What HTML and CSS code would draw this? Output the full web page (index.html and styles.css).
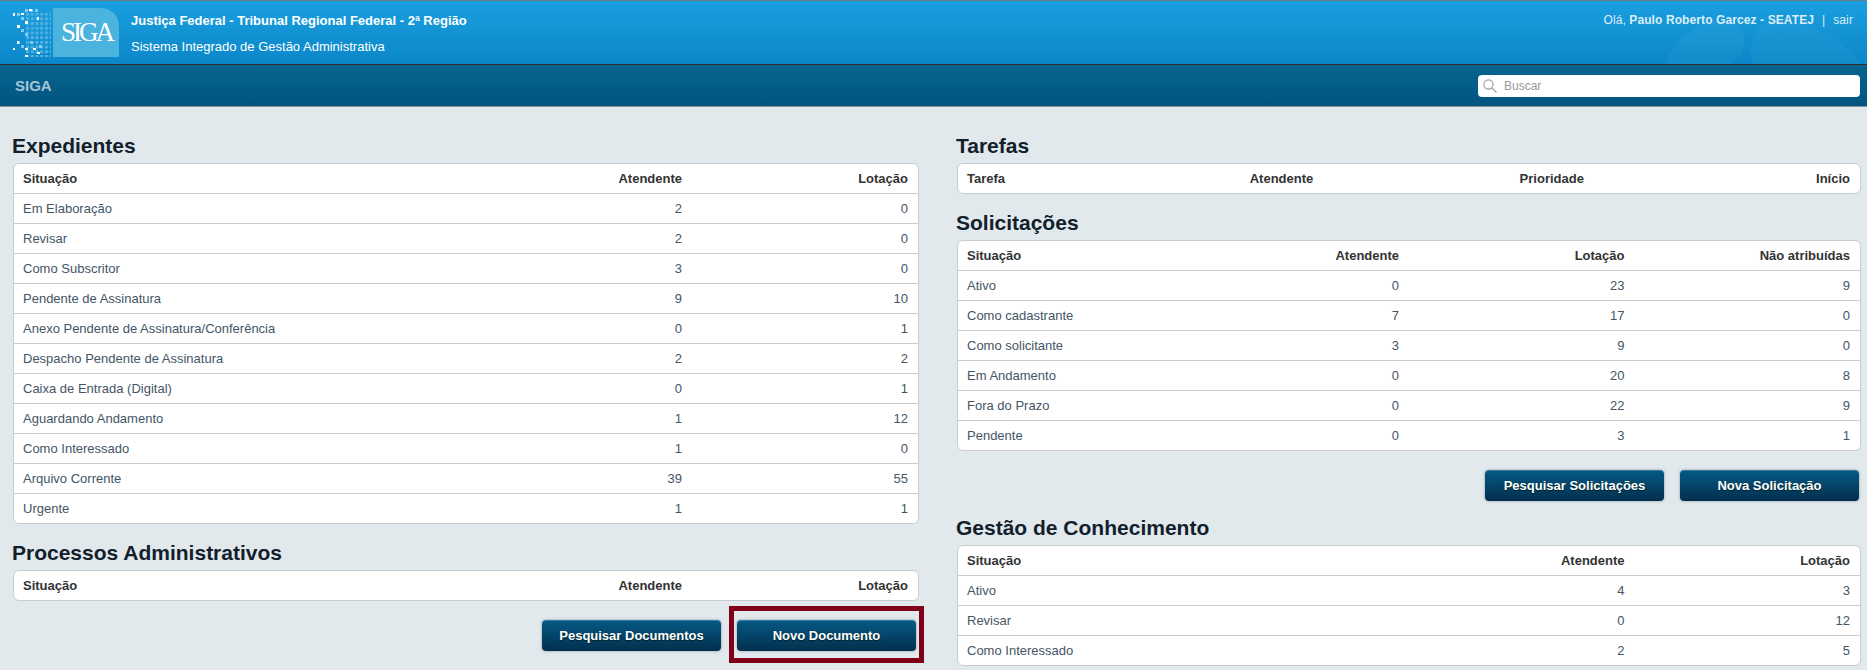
FILE: index.html
```html
<!doctype html>
<html lang="pt-BR">
<head>
    <meta charset="UTF-8">
    <title>SIGA</title>
    <link rel="stylesheet" href="styles.css">
</head>
<body>
<div class="topo">
    <svg class="marca-dagua" width="207" height="63" viewBox="0 0 207 63">
        <path d="M6 63C12 42 30 26 52 21C72 17 86 24 84 40C83 52 78 58 70 63Z" fill="#fff" opacity=".04"/>
        <path d="M92 63C88 44 92 28 106 22C122 16 150 22 172 36C186 45 196 54 201 63Z" fill="#fff" opacity=".035"/>
    </svg>
    <div class="logo">
        <svg class="logo-pontos" width="40" height="50" viewBox="0 0 40 50">
            <defs>
                <pattern id="grade" x="0" y="0" width="4.7" height="4.7" patternUnits="userSpaceOnUse">
                    <rect width="3" height="3" fill="#4fb2e3"/>
                </pattern>
            </defs>
            <rect x="14" y="5" width="25" height="44" fill="url(#grade)"/>
            <g fill="#7fcbef">
                <rect x="5" y="5" width="3" height="3"/><rect x="9" y="9" width="3" height="3"/><rect x="13" y="1" width="3" height="3"/>
                <rect x="18" y="1" width="3" height="3"/><rect x="23" y="1" width="3" height="3"/><rect x="9" y="21" width="3" height="3"/>
                <rect x="13" y="25" width="3" height="3"/><rect x="5" y="33" width="3" height="3"/><rect x="9" y="37" width="3" height="3"/>
                <rect x="18" y="33" width="3" height="3"/><rect x="27" y="37" width="3" height="3"/>
            </g>
            <g fill="#fff">
                <rect x="1" y="5" width="2" height="3"/><rect x="9" y="5" width="3" height="2"/><rect x="17" y="1" width="3" height="2"/>
                <rect x="25" y="9" width="2" height="3"/><rect x="5" y="17" width="3" height="3"/><rect x="13" y="13" width="3" height="3"/>
                <rect x="5" y="33" width="2" height="3"/><rect x="1" y="40" width="2" height="2"/><rect x="13" y="40" width="3" height="2"/>
                <rect x="21" y="40" width="3" height="2"/><rect x="13" y="47" width="3" height="2"/><rect x="25" y="44" width="3" height="2"/>
            </g>
        </svg>
        <div class="logo-caixa">SIGA</div>
    </div>
    <div class="topo-titulos">
        <div class="topo-orgao">Justiça Federal - Tribunal Regional Federal - 2ª Região</div>
        <div class="topo-sistema">Sistema Integrado de Gestão Administrativa</div>
    </div>
    <div class="topo-usuario">Olá, <b>Paulo Roberto Garcez - SEATEJ</b><span class="sep">|</span>sair</div>
</div>
<div class="nav">
    <span class="nav-titulo">SIGA</span>
    <div class="busca">
        <svg width="14" height="14" viewBox="0 0 14 14" fill="none" stroke="#9a9a9a" stroke-width="1.1">
            <circle cx="5.5" cy="5.5" r="4.6"/>
            <path d="M9 9L13.5 13.5"/>
        </svg>
        <span>Buscar</span>
    </div>
</div>
<div class="main">
    <div class="coluna">
        <h2>Expedientes</h2>
        <table class="cols-3">
            <tr><th>Situação</th><th>Atendente</th><th>Lotação</th></tr>
            <tr><td>Em Elaboração</td><td>2</td><td>0</td></tr>
            <tr><td>Revisar</td><td>2</td><td>0</td></tr>
            <tr><td>Como Subscritor</td><td>3</td><td>0</td></tr>
            <tr><td>Pendente de Assinatura</td><td>9</td><td>10</td></tr>
            <tr><td>Anexo Pendente de Assinatura/Conferência</td><td>0</td><td>1</td></tr>
            <tr><td>Despacho Pendente de Assinatura</td><td>2</td><td>2</td></tr>
            <tr><td>Caixa de Entrada (Digital)</td><td>0</td><td>1</td></tr>
            <tr><td>Aguardando Andamento</td><td>1</td><td>12</td></tr>
            <tr><td>Como Interessado</td><td>1</td><td>0</td></tr>
            <tr><td>Arquivo Corrente</td><td>39</td><td>55</td></tr>
            <tr><td>Urgente</td><td>1</td><td>1</td></tr>
        </table>
        <h2>Processos Administrativos</h2>
        <table class="cols-3">
            <tr><th>Situação</th><th>Atendente</th><th>Lotação</th></tr>
        </table>
        <div class="botoes botoes-doc">
            <a class="botao">Pesquisar Documentos</a>
            <span class="destaque"><a class="botao">Novo Documento</a></span>
        </div>
    </div>
    <div class="coluna">
        <h2>Tarefas</h2>
        <table class="cols-tarefas">
            <tr><th>Tarefa</th><th>Atendente</th><th>Prioridade</th><th>Início</th></tr>
        </table>
        <h2>Solicitações</h2>
        <table class="cols-4">
            <tr><th>Situação</th><th>Atendente</th><th>Lotação</th><th>Não atribuídas</th></tr>
            <tr><td>Ativo</td><td>0</td><td>23</td><td>9</td></tr>
            <tr><td>Como cadastrante</td><td>7</td><td>17</td><td>0</td></tr>
            <tr><td>Como solicitante</td><td>3</td><td>9</td><td>0</td></tr>
            <tr><td>Em Andamento</td><td>0</td><td>20</td><td>8</td></tr>
            <tr><td>Fora do Prazo</td><td>0</td><td>22</td><td>9</td></tr>
            <tr><td>Pendente</td><td>0</td><td>3</td><td>1</td></tr>
        </table>
        <div class="botoes">
            <a class="botao">Pesquisar Solicitações</a>
            <a class="botao">Nova Solicitação</a>
        </div>
        <h2>Gestão de Conhecimento</h2>
        <table class="cols-3">
            <tr><th>Situação</th><th>Atendente</th><th>Lotação</th></tr>
            <tr><td>Ativo</td><td>4</td><td>3</td></tr>
            <tr><td>Revisar</td><td>0</td><td>12</td></tr>
            <tr><td>Como Interessado</td><td>2</td><td>5</td></tr>
        </table>
    </div>
</div>
</body>
</html>
```

FILE: styles.css
```css
*{margin: 0;padding: 0;box-sizing: border-box}
html,body{height: 100%;overflow: hidden}
body{background: #e2e9ed;font-family: "Liberation Sans", Arial, sans-serif;font-size: 13px;color: #456;}

.topo{
    position: relative;
    height: 65px;
    display: flex;
    background: linear-gradient(#1a9fe0, #0b87c8);
    border-top: 1px solid #6b7b85;
    border-bottom: 1px solid #3a2a20;
    color: #fff;
}
.marca-dagua{position: absolute;right: 0;bottom: 0}
.logo{display: flex;align-items: flex-start;margin: 7px 0 0 12px;width: 107px}
.logo-pontos{flex: none}
.logo-caixa{
    flex: none;
    width: 66px;
    height: 49px;
    margin-left: 1px;
    background: #4ab3de;
    border-top-right-radius: 18px;
    color: #fff;
    font-family: "Liberation Serif", serif;
    font-size: 27px;
    line-height: 27px;
    letter-spacing: -3px;
    padding: 11px 0 0 8px;
}
.topo-titulos{margin-left: 12px;padding-top: 12px}
.topo-orgao{font-weight: bold;font-size: 13px;line-height: 16px}
.topo-sistema{font-size: 13px;line-height: 16px;margin-top: 10px}
.topo-usuario{position: relative;margin-left: auto;padding: 12px 14px 0 0;font-size: 12px;line-height: 15px;letter-spacing: .1px;color: #dceef8}
.topo-usuario .sep{margin: 0 8px}

.nav{
    height: 42px;
    display: flex;
    align-items: center;
    justify-content: space-between;
    background: linear-gradient(#06648f, #005580);
    border-bottom: 1px solid #8a979f;
    padding: 0 7px 0 15px;
}
.nav-titulo{font-weight: bold;font-size: 15px;color: #a6c5d6}
.busca{
    width: 382px;
    height: 22px;
    display: flex;
    align-items: center;
    gap: 7px;
    padding-left: 5px;
    background: #fff;
    border-radius: 4px;
    color: #999;
    font-size: 12px;
}

.main{display: grid;grid-template-columns: 906px 904px;gap: 38px;padding: 27px 0 0 13px}
h2{font-size: 21px;line-height: 24px;margin: 0 0 5px -1px;color: #12202c}
table{
    width: 100%;
    table-layout: fixed;
    border-collapse: separate;
    border-spacing: 0;
    background: #fff;
    border: 1px solid #c8cdd0;
    border-radius: 6px;
    margin-bottom: 17px;
}
th,td{
    height: 30px;
    padding: 0 10px;
    text-align: right;
    border-top: 1px solid #c8cdd0;
    font-size: 13px;
}
tr:first-child th{border-top: 0;height: 29px}
th{color: #333;font-weight: bold}
th:first-child,td:first-child{text-align: left;padding-left: 9px}

.cols-3 th:first-child{width: 50%}
.cols-4 th{width: 25%}
.cols-tarefas th:first-child{width: 20%}
.cols-tarefas th:nth-child(2){width: 20.5%}
.cols-tarefas th:nth-child(3){width: 30%}

.botoes{display: flex;justify-content: flex-end;gap: 16px;margin: 19px 2px 15px 0}
.botoes-doc{margin-right: 3px}
.botao{
    display: block;
    width: 179px;
    height: 31px;
    line-height: 32px;
    text-align: center;
    background: linear-gradient(#055a86, #032f4d);
    border-radius: 4px;
    box-shadow: inset 0 1px 0 rgba(255,255,255,.2), 0 0 3px #8d989f;
    color: #fff;
    font-weight: bold;
    font-size: 13px;
    text-shadow: 0 1px 1px #022;
}
.destaque{position: relative;display: block}
.destaque::after{
    content: "";
    position: absolute;
    inset: -14px -8px -12px -8px;
    border: 5px solid #7f0018;
}
```
